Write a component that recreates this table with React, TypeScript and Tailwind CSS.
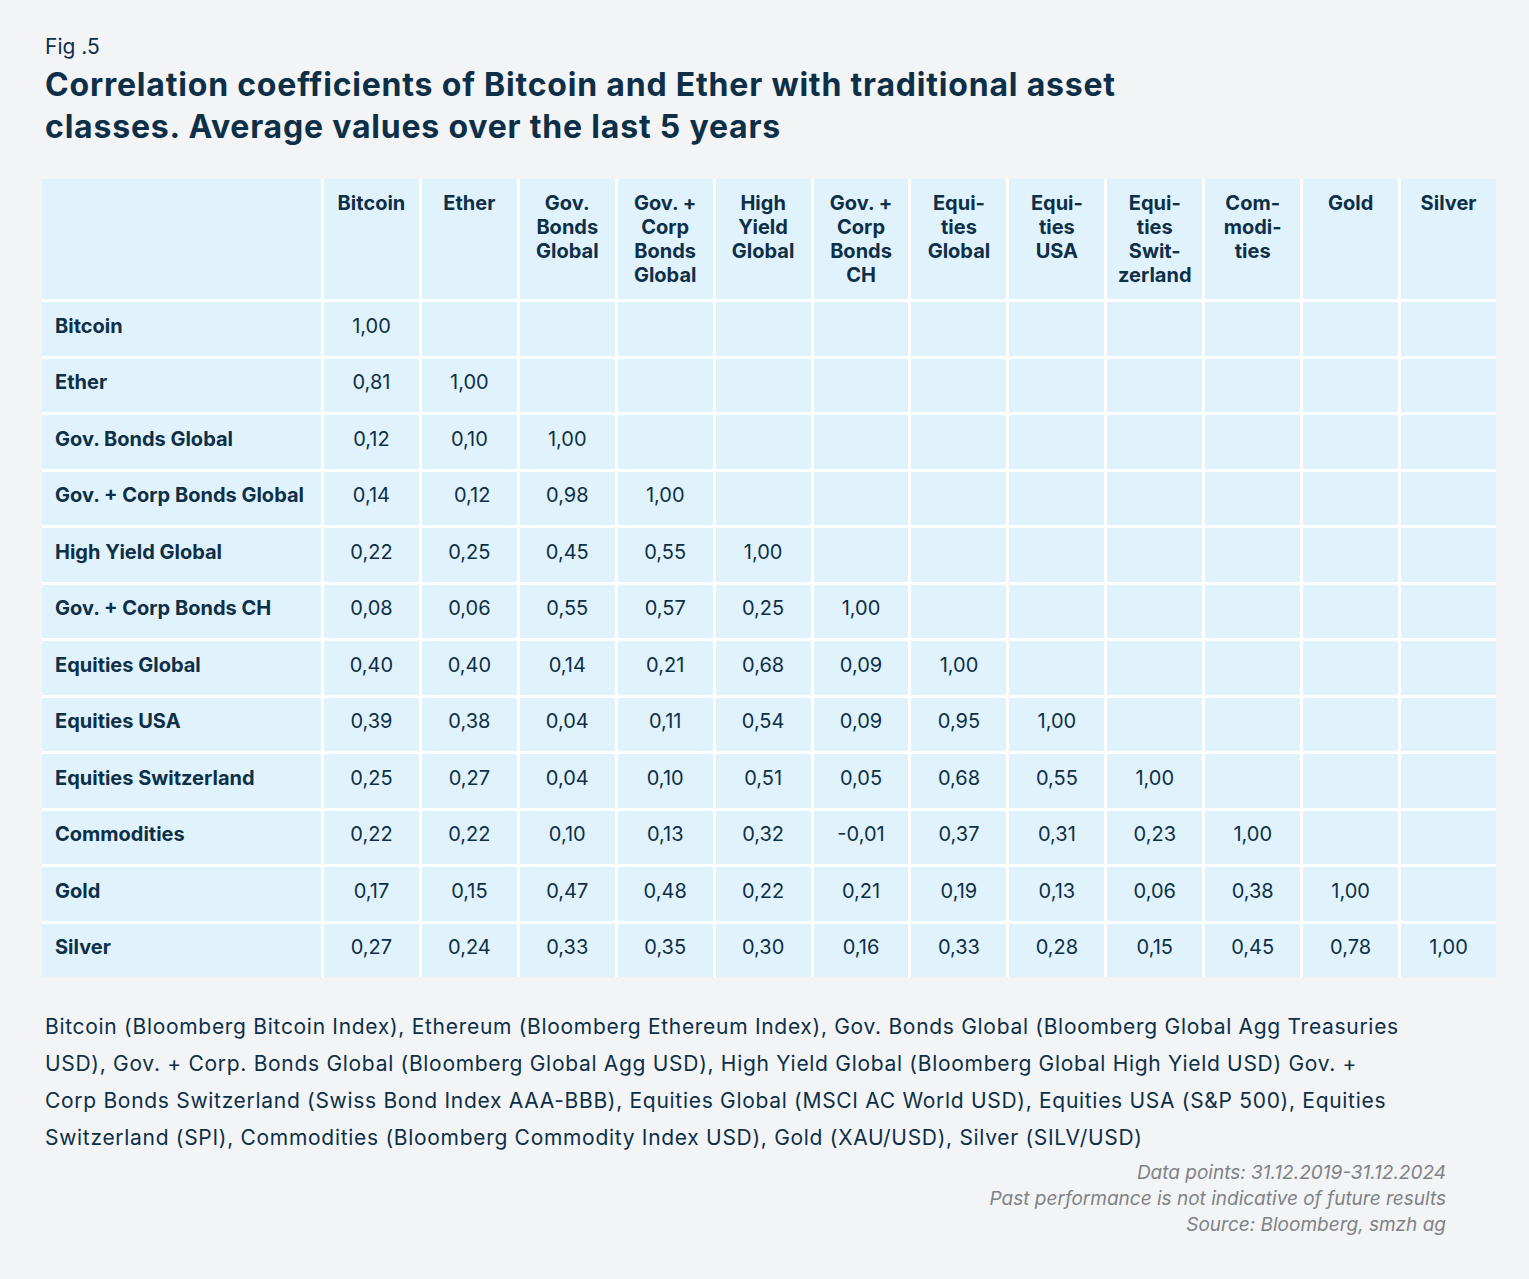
import React from "react";

const cols = [
  ["Bitcoin"],
  ["Ether"],
  ["Gov.", "Bonds", "Global"],
  ["Gov. +", "Corp", "Bonds", "Global"],
  ["High", "Yield", "Global"],
  ["Gov. +", "Corp", "Bonds", "CH"],
  ["Equi-", "ties", "Global"],
  ["Equi-", "ties", "USA"],
  ["Equi-", "ties", "Swit-", "zerland"],
  ["Com-", "modi-", "ties"],
  ["Gold"],
  ["Silver"],
];

const rows: [string, string[]][] = [
  ["Bitcoin", ["1,00"]],
  ["Ether", ["0,81", "1,00"]],
  ["Gov. Bonds Global", ["0,12", "0,10", "1,00"]],
  ["Gov. + Corp Bonds Global", ["0,14", "\u00a00,12", "0,98", "1,00"]],
  ["High Yield Global", ["0,22", "0,25", "0,45", "0,55", "1,00"]],
  ["Gov. + Corp Bonds CH", ["0,08", "0,06", "0,55", "0,57", "0,25", "1,00"]],
  ["Equities Global", ["0,40", "0,40", "0,14", "0,21", "0,68", "0,09", "1,00"]],
  ["Equities USA", ["0,39", "0,38", "0,04", "0,11", "0,54", "0,09", "0,95", "1,00"]],
  ["Equities Switzerland", ["0,25", "0,27", "0,04", "0,10", "0,51", "0,05", "0,68", "0,55", "1,00"]],
  ["Commodities", ["0,22", "0,22", "0,10", "0,13", "0,32", "-0,01", "0,37", "0,31", "0,23", "1,00"]],
  ["Gold", ["0,17", "0,15", "0,47", "0,48", "0,22", "0,21", "0,19", "0,13", "0,06", "0,38", "1,00"]],
  ["Silver", ["0,27", "0,24", "0,33", "0,35", "0,30", "0,16", "0,33", "0,28", "0,15", "0,45", "0,78", "1,00"]],
];

const footLines = [
  "Bitcoin (Bloomberg Bitcoin Index), Ethereum (Bloomberg Ethereum Index), Gov. Bonds Global (Bloomberg Global Agg Treasuries",
  "USD), Gov. + Corp. Bonds Global (Bloomberg Global Agg USD), High Yield Global (Bloomberg Global High Yield USD) Gov. +",
  "Corp Bonds Switzerland (Swiss Bond Index AAA-BBB), Equities Global (MSCI AC World USD), Equities USA (S&P 500), Equities",
  "Switzerland (SPI), Commodities (Bloomberg Commodity Index USD), Gold (XAU/USD), Silver (SILV/USD)",
];

export default function App() {
  return (
    <div
      className="w-[1529px] h-[1279px] bg-[#f2f4f6] pl-[42px] pt-[33px] text-[#0d2f48]"
      style={{ fontFamily: "Inter, 'Noto Sans', sans-serif" }}
    >
      <div className="ml-[3px] text-[21px] leading-[28px]">Fig .5</div>
      <h1 className="ml-[3px] mt-[3px] text-[32px] leading-[42px] font-bold tracking-[0.8px]">
        <div>Correlation coefficients of Bitcoin and Ether with traditional asset</div>
        <div>classes. Average values over the last 5 years</div>
      </h1>

      <div className="mt-[31px] w-[1454px] grid grid-cols-[279px_repeat(12,minmax(0,1fr))] grid-rows-[120px_repeat(12,53.5px)] gap-[3px] bg-white">
        <div className="bg-[#e0f2fc]" />
        {cols.map((c, i) => (
          <div
            key={i}
            className="bg-[#e0f2fc] pt-[12px] text-center text-[20px] leading-[24px] font-bold"
          >
            {c.map((l, j) => (
              <div key={j}>{l}</div>
            ))}
          </div>
        ))}
        {rows.map(([label, vals], r) => (
          <React.Fragment key={r}>
            <div className="bg-[#e0f2fc] flex items-center pl-[13px] pb-[6px] text-[20px] font-bold">
              {label}
            </div>
            {Array.from({ length: 12 }).map((_, i) => (
              <div
                key={i}
                className="bg-[#e0f2fc] flex items-center justify-center pb-[6px] text-[20px]"
              >
                {vals[i] ?? ""}
              </div>
            ))}
          </React.Fragment>
        ))}
      </div>

      <div className="mt-[31px] ml-[3px] text-[21px] leading-[37px] tracking-[0.7px] whitespace-nowrap">
        {footLines.map((l, i) => (
          <div key={i}>{l}</div>
        ))}
      </div>

      <div className="mt-[4px] w-[1404px] text-right italic text-[19px] leading-[26px] text-[#7f8285]">
        <div>Data points: 31.12.2019-31.12.2024</div>
        <div>Past performance is not indicative of future results</div>
        <div>Source: Bloomberg, smzh ag</div>
      </div>
    </div>
  );
}
